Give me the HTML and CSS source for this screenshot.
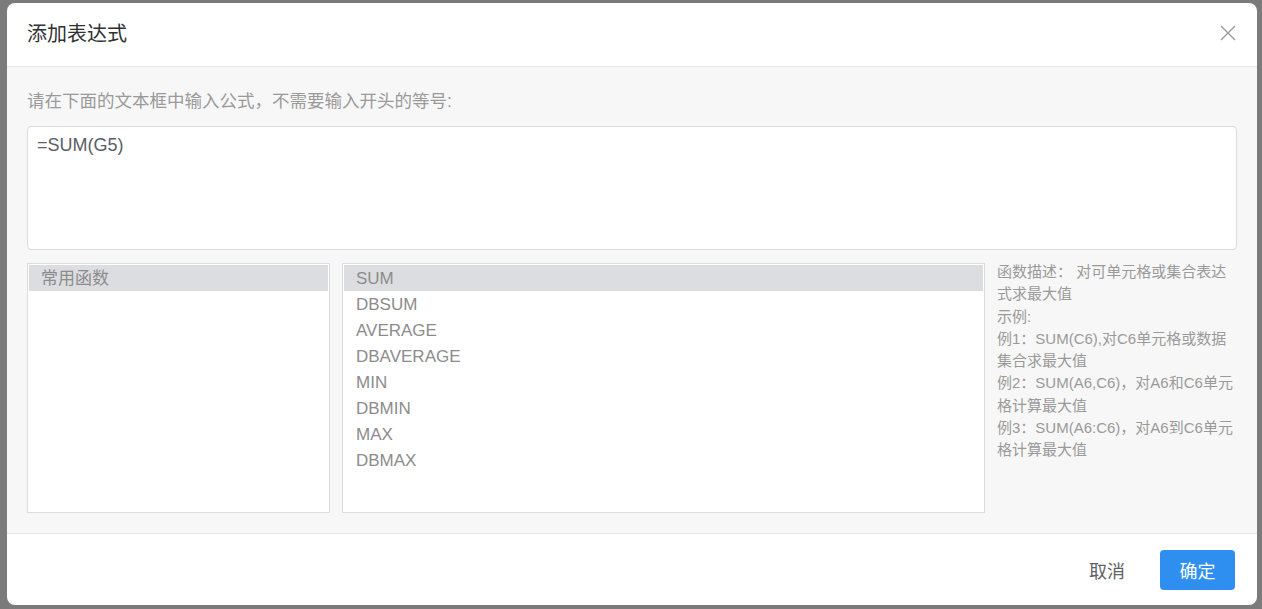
FILE: index.html
```html
<!DOCTYPE html>
<html lang="zh-CN">
<head>
<meta charset="utf-8">
<title>添加表达式</title>
<link rel="stylesheet" href="styles.css">
</head>
<body>
<div class="backdrop">
  <div class="dialog">
    <div class="dialog-header">
      <span class="dialog-title">添加表达式</span>
      <button class="close-btn" aria-label="关闭">
        <svg width="16" height="16" viewBox="0 0 16 16"><path d="M1 1 L15 15 M15 1 L1 15" stroke="#9a9a9a" stroke-width="1.4" fill="none"/></svg>
      </button>
    </div>
    <div class="dialog-body">
      <div class="hint">请在下面的文本框中输入公式，不需要输入开头的等号:</div>
      <div class="formula">=SUM(G5)</div>
      <div class="panels">
        <div class="list list-cat">
          <div class="item active">常用函数</div>
        </div>
        <div class="list list-fn">
          <div class="item active">SUM</div>
          <div class="item">DBSUM</div>
          <div class="item">AVERAGE</div>
          <div class="item">DBAVERAGE</div>
          <div class="item">MIN</div>
          <div class="item">DBMIN</div>
          <div class="item">MAX</div>
          <div class="item">DBMAX</div>
        </div>
        <div class="desc">
          <div>函数描述： 对可单元格或集合表达式求最大值</div>
          <div>示例:</div>
          <div>例1：SUM(C6),对C6单元格或数据集合求最大值</div>
          <div>例2：SUM(A6,C6)，对A6和C6单元格计算最大值</div>
          <div>例3：SUM(A6:C6)，对A6到C6单元格计算最大值</div>
        </div>
      </div>
    </div>
    <div class="dialog-footer">
      <button class="btn btn-text">取消</button>
      <button class="btn btn-primary">确定</button>
    </div>
  </div>
</div>
</body>
</html>
```

FILE: styles.css
```css
* { box-sizing: border-box; }
html, body {
  margin: 0;
  padding: 0;
  height: 100%;
}
body {
  font-family: "Liberation Sans", "Noto Sans CJK SC", sans-serif;
  background: #7b7b7b;
  overflow: hidden;
}
.backdrop {
  width: 1262px;
  height: 609px;
  padding: 3px 5px 4px 7px;
  background: #7b7b7b;
}
.dialog {
  width: 1250px;
  height: 602px;
  background: #fff;
  border-radius: 8px;
  overflow: hidden;
  display: flex;
  flex-direction: column;
}
.dialog-header {
  height: 64px;
  flex: none;
  border-bottom: 1px solid #e8e8e8;
  display: flex;
  align-items: center;
  justify-content: space-between;
  padding: 0 20px 0 20px;
}
.dialog-title {
  font-size: 20px;
  color: #303133;
  line-height: 24px;
  margin-top: -2px;
}
.close-btn {
  border: 0;
  background: transparent;
  padding: 0;
  width: 16px;
  height: 16px;
  margin-right: 1px;
  margin-top: -3px;
  display: flex;
}
.dialog-body {
  flex: none;
  height: 467px;
  background: #f7f7f7;
  padding: 22px 20px 20px 20px;
  border-bottom: 1px solid #e4e4e4;
}
.hint {
  font-size: 17.5px;
  line-height: 24px;
  color: #9a9a9a;
  margin-bottom: 13px;
}
.formula {
  height: 124px;
  background: #fff;
  border: 1px solid #dcdcdc;
  border-radius: 4px;
  padding: 7px 9px;
  font-size: 18px;
  line-height: 22px;
  color: #5a5e66;
}
.panels {
  margin-top: 13px;
  display: flex;
  gap: 12px;
  height: 250px;
}
.list {
  background: #fff;
  border: 1px solid #dcdcdc;
  padding: 1px;
}
.list-cat { width: 303px; flex: none; }
.list-fn { width: 643px; flex: none; }
.item {
  height: 26px;
  line-height: 27px;
  padding-left: 12px;
  font-size: 17px;
  color: #8c8c8c;
}
.item.active {
  background: #dcdde1;
}
.desc {
  flex: 1;
  font-size: 15px;
  line-height: 22.25px;
  color: #9a9a9a;
  margin-top: -2px;
}
.dialog-footer {
  flex: 1;
  display: flex;
  justify-content: flex-end;
  align-items: flex-start;
  padding: 16px 22px 0 0;
  gap: 18px;
}
.btn {
  font-family: inherit;
  font-size: 18px;
  height: 40px;
  border: 0;
  border-radius: 4px;
  cursor: pointer;
}
.btn-text {
  background: transparent;
  color: #606266;
  padding: 0 17px;
}
.btn-primary {
  width: 75px;
  background: #2f8ff0;
  color: #fff;
  padding: 0;
}
```
